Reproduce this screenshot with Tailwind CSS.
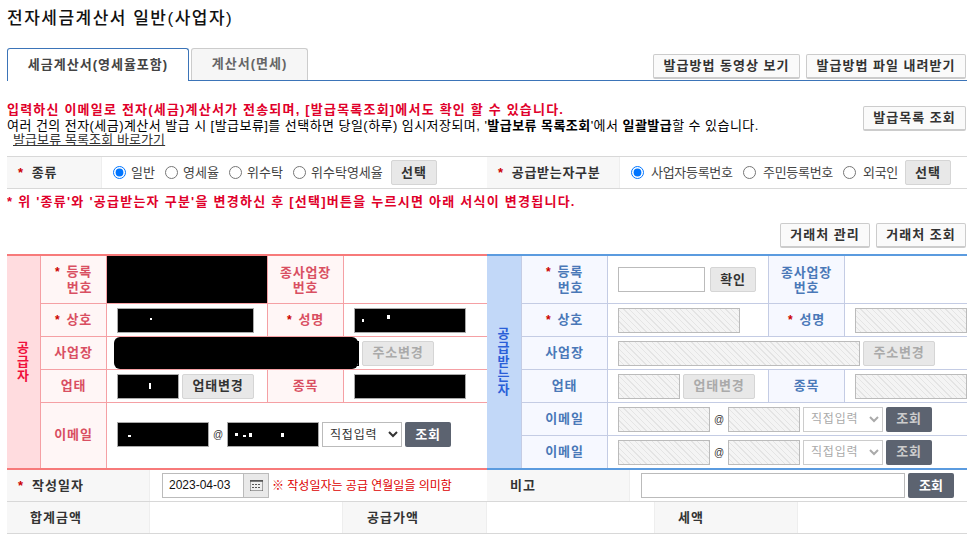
<!DOCTYPE html>
<html lang="ko">
<head>
  <meta charset="UTF-8">
  <title>전자세금계산서 일반(사업자)</title>
  <script src="https://cdn.jsdelivr.net/npm/@tailwindcss/browser@4"></script>
</head>
<body class="bg-white font-['Liberation_Sans','Noto_Sans_CJK_KR',sans-serif] text-[13px] text-black overflow-hidden">
  <div class="w-[960px] ml-[7px] h-[539px] overflow-hidden">
    <!-- Title -->
    <h1 class="h-[48px] pt-[6px] text-[17px] leading-[26px] font-medium tracking-[1.5px] text-[#111]">전자세금계산서 일반(사업자)</h1>

    <!-- Tabs -->
    <div class="flex h-[33px] items-end border-b border-[#3b74b8]">
      <div class="w-[182px] h-[33px] -mb-px border border-b-0 border-[#3b74b8] rounded-t-[3px] bg-white text-center leading-[31px] font-bold tracking-[1px] text-[#444]">세금계산서(영세율포함)</div>
      <div class="w-[117px] h-[32px] ml-[2px] border border-b-0 border-[#ccc] rounded-t-[3px] bg-[#f6f6f6] text-center leading-[30px] font-bold tracking-[1px] text-[#666]">계산서(면세)</div>
      <div class="ml-auto flex gap-[6px] pr-px mb-px">
        <button class="w-[147px] h-[25px] border border-[#ccc] border-b-2 rounded-[2px] bg-[#fafafa] font-bold tracking-[1px] text-[#333]">발급방법 동영상 보기</button>
        <button class="w-[160px] h-[25px] border border-[#ccc] border-b-2 rounded-[2px] bg-[#fafafa] font-bold tracking-[1px] text-[#333]">발급방법 파일 내려받기</button>
      </div>
    </div>

    <!-- Notice -->
    <div class="flex h-[75px]">
      <div class="flex-1 pt-[20px]">
        <p class="h-[17px] leading-[17px] font-bold tracking-[1.2px] text-[#e0002a]">입력하신 이메일로 전자(세금)계산서가 전송되며, [발급목록조회]에서도 확인 할 수 있습니다.</p>
        <p class="h-[16px] leading-[16px] tracking-[0.45px]">여러 건의 전자(세금)계산서 발급 시 [발급보류]를 선택하면 당일(하루) 임시저장되며, '<b>발급보류 목록조회</b>'에서 <b>일괄발급</b>할 수 있습니다.</p>
        <a class="block -mt-[2px] ml-[6px] leading-[16px] tracking-[0.1px] text-[#333] underline">발급보류 목록조회 바로가기</a>
      </div>
      <button class="w-[103px] h-[25px] mt-[25px] mr-px border border-[#ccc] border-b-2 rounded-[2px] bg-[#fafafa] font-bold tracking-[1px] text-[#333]">발급목록 조회</button>
    </div>

    <!-- Type row -->
    <div class="flex h-[33px] border-y border-[#d8d8d8]">
      <div class="w-[95px] bg-[#f7f7f7] border-r border-[#eee] pl-[11px] flex items-center font-bold text-[#333] tracking-[0.8px]"><span class="text-[#c00] mr-[8px]">*</span>종류</div>
      <div class="w-[385px] flex items-center pl-[11px] text-[#444]">
        <input type="radio" name="kind" checked class="w-[13px] h-[13px] m-0">
        <span class="ml-[5px] w-[34px]">일반</span>
        <input type="radio" name="kind" class="w-[13px] h-[13px] m-0">
        <span class="ml-[5px] w-[46px]">영세율</span>
        <input type="radio" name="kind" class="w-[13px] h-[13px] m-0">
        <span class="ml-[5px] w-[46px]">위수탁</span>
        <input type="radio" name="kind" class="w-[13px] h-[13px] m-0">
        <span class="ml-[5px] w-[80px]">위수탁영세율</span>
        <button class="w-[46px] h-[25px] border border-[#d5d5d5] rounded-[2px] bg-[#e8e8e8] font-bold tracking-[1px] text-[#333]">선택</button>
      </div>
      <div class="w-[133px] bg-[#f7f7f7] border-r border-[#eee] pl-[11px] flex items-center font-bold text-[#333] tracking-[0.7px]"><span class="text-[#c00] mr-[8px]">*</span>공급받는자구분</div>
      <div class="flex-1 flex items-center pl-[11px] text-[#444] tracking-[-0.3px]">
        <input type="radio" name="recv" checked class="w-[13px] h-[13px] m-0">
        <span class="ml-[7px] w-[92px]">사업자등록번호</span>
        <input type="radio" name="recv" class="w-[13px] h-[13px] m-0">
        <span class="ml-[7px] w-[80px]">주민등록번호</span>
        <input type="radio" name="recv" class="w-[13px] h-[13px] m-0">
        <span class="ml-[7px] w-[42px]">외국인</span>
        <button class="w-[46px] h-[25px] border border-[#d5d5d5] rounded-[2px] bg-[#e8e8e8] font-bold tracking-[1px] text-[#333]">선택</button>
      </div>
    </div>

    <!-- Note + partner buttons -->
    <div class="h-[65px] pt-[4px]">
      <p class="h-[23px] leading-[17px] font-bold tracking-[1.25px] text-[#e0002a]">* 위 '종류'와 '공급받는자 구분'을 변경하신 후 [선택]버튼을 누르시면 아래 서식이 변경됩니다.</p>
      <div class="flex justify-end gap-[6px] pr-px mt-[7px]">
        <button class="w-[90px] h-[25px] border border-[#ccc] border-b-2 rounded-[2px] bg-[#fafafa] font-bold tracking-[1px] text-[#333]">거래처 관리</button>
        <button class="w-[90px] h-[25px] border border-[#ccc] border-b-2 rounded-[2px] bg-[#fafafa] font-bold tracking-[1px] text-[#333]">거래처 조회</button>
      </div>
    </div>

    <!-- Supplier / receiver -->
    <div class="flex h-[216px]">
      <div class="w-[480px] grid grid-cols-[33px_66px_161px_76px_144px] grid-rows-[48px_33px_33px_33px_65px] border-y-2 border-[#f77a7a] font-bold text-[#d94f62] tracking-[0.8px]">
        <div class="row-span-5 bg-[#ffdcdf] flex items-center justify-center"><span class="w-[14px] text-center break-all leading-[14px] text-[#f0103c]">공급자</span></div>
        <div class="border-l border-b border-[#f5a0a4] bg-[#fff6f6] flex items-center justify-center text-center leading-[15px]"><span><span class="text-[#c00] text-[12px] mr-[6px]">*</span>등록<br><span class="ml-[12px]">번호</span></span></div>
        <div class="border-l border-b border-[#f5a0a4] bg-black"></div>
        <div class="border-l border-b border-[#f5a0a4] bg-[#fff6f6] flex items-center justify-center text-center leading-[15px]">종사업장<br>번호</div>
        <div class="border-l border-b border-[#f5a0a4]"></div>

        <div class="border-l border-b border-[#f5a0a4] bg-[#fff6f6] flex items-center justify-center"><span class="text-[#c00] text-[12px] mr-[6px]">*</span>상호</div>
        <div class="border-l border-b border-[#f5a0a4] flex items-center pl-[10px]"><div class="relative w-[137px] h-[25px] border border-[#aaa] bg-black"><i class="absolute left-[32px] top-[9px] w-[2px] h-[2px] bg-white"></i></div></div>
        <div class="border-l border-b border-[#f5a0a4] bg-[#fff6f6] flex items-center justify-center"><span class="text-[#c00] text-[12px] mr-[6px]">*</span>성명</div>
        <div class="border-l border-b border-[#f5a0a4] flex items-center pl-[10px]"><div class="relative w-[112px] h-[25px] border border-[#aaa] bg-black"><i class="absolute left-[7px] top-[10px] w-[2px] h-[3px] bg-white"></i><i class="absolute left-[32px] top-[6px] w-[3px] h-[4px] bg-white"></i></div></div>

        <div class="border-l border-b border-[#f5a0a4] bg-[#fff6f6] flex items-center justify-center">사업장</div>
        <div class="col-span-3 border-l border-b border-[#f5a0a4] relative flex items-center pl-[10px]">
          <div class="w-[242px] h-[25px] border border-black"></div>
          <div class="absolute left-[7px] top-0 bottom-0 w-[244px] bg-black rounded-[6px]"></div>
          <button class="w-[72px] h-[25px] ml-[3px] border border-[#d5d5d5] rounded-[2px] bg-[#e8e8e8] text-[#aaa]">주소변경</button>
        </div>

        <div class="border-l border-b border-[#f5a0a4] bg-[#fff6f6] flex items-center justify-center">업태</div>
        <div class="border-l border-b border-[#f5a0a4] flex items-center pl-[10px]">
          <div class="relative w-[62px] h-[25px] border border-[#aaa] bg-black"><i class="absolute left-[31px] top-[8px] w-[2px] h-[6px] bg-white"></i></div>
          <button class="w-[72px] h-[25px] ml-[3px] border border-[#d5d5d5] rounded-[2px] bg-[#e8e8e8] text-[#333]">업태변경</button>
        </div>
        <div class="border-l border-b border-[#f5a0a4] bg-[#fff6f6] flex items-center justify-center">종목</div>
        <div class="border-l border-b border-[#f5a0a4] flex items-center pl-[10px]"><div class="w-[112px] h-[25px] border border-[#aaa] bg-black"></div></div>

        <div class="border-l border-[#f5a0a4] bg-[#fff6f6] flex items-center justify-center pb-[2px]">이메일</div>
        <div class="col-span-3 border-l border-[#f5a0a4] flex items-center pl-[10px] pb-[2px] font-normal">
          <div class="relative w-[92px] h-[25px] border border-[#aaa] bg-black"><i class="absolute left-[10px] top-[12px] w-[3px] h-[2px] bg-white"></i></div>
          <span class="w-[18px] text-center text-[10px] text-[#333] tracking-normal">@</span>
          <div class="relative w-[92px] h-[25px] border border-[#aaa] bg-black"><i class="absolute left-[7px] top-[10px] w-[3px] h-[3px] bg-white"></i><i class="absolute left-[15px] top-[12px] w-[3px] h-[2px] bg-white"></i><i class="absolute left-[21px] top-[10px] w-[3px] h-[4px] bg-white"></i><i class="absolute left-[53px] top-[10px] w-[3px] h-[4px] bg-white"></i></div>
          <select class="w-[80px] h-[25px] ml-[3px] border border-[#bbb] bg-white text-[12px] text-[#333] pl-[3px]"><option>직접입력</option></select>
          <button class="w-[46px] h-[25px] ml-[3px] rounded-[2px] bg-[#5c6370] font-bold text-white">조회</button>
        </div>
      </div>

      <div class="w-[480px] overflow-hidden grid grid-cols-[34px_86px_161px_76px_123px] grid-rows-[48px_33px_33px_33px_33px_32px] border-y-2 border-[#5b9bdf] font-bold text-[#4a78b8] tracking-[0.8px]">
        <div class="row-span-6 bg-[#c2d8f8] flex items-center justify-center"><span class="w-[14px] text-center break-all leading-[14px] text-[#2a5fd8]">공급받는자</span></div>
        <div class="border-l border-b border-[#c4cce4] bg-[#f6f8ff] flex items-center justify-center text-center leading-[15px]"><span><span class="text-[#c00] text-[12px] mr-[6px]">*</span>등록<br><span class="ml-[12px]">번호</span></span></div>
        <div class="border-l border-b border-[#c4cce4] flex items-center pl-[10px]">
          <input class="w-[87px] h-[25px] border border-[#bbb] bg-white">
          <button class="w-[46px] h-[25px] ml-[5px] border border-[#d5d5d5] rounded-[2px] bg-[#e8e8e8] text-[#333]">확인</button>
        </div>
        <div class="border-l border-b border-[#c4cce4] bg-[#f6f8ff] flex items-center justify-center text-center leading-[15px]">종사업장<br>번호</div>
        <div class="border-l border-b border-[#c4cce4]"></div>

        <div class="border-l border-b border-[#c4cce4] bg-[#f6f8ff] flex items-center justify-center"><span class="text-[#c00] text-[12px] mr-[6px]">*</span>상호</div>
        <div class="border-l border-b border-[#c4cce4] flex items-center pl-[10px]"><div class="w-[122px] h-[25px] border border-[#bbb] bg-[repeating-linear-gradient(45deg,#f4f4f4,#f4f4f4_3px,#e4e4e4_3px,#e4e4e4_4px)]"></div></div>
        <div class="border-l border-b border-[#c4cce4] bg-[#f6f8ff] flex items-center justify-center"><span class="text-[#c00] text-[12px] mr-[6px]">*</span>성명</div>
        <div class="border-l border-b border-[#c4cce4] flex items-center pl-[10px]"><div class="w-[112px] h-[25px] shrink-0 border border-[#bbb] bg-[repeating-linear-gradient(45deg,#f4f4f4,#f4f4f4_3px,#e4e4e4_3px,#e4e4e4_4px)]"></div></div>

        <div class="border-l border-b border-[#c4cce4] bg-[#f6f8ff] flex items-center justify-center">사업장</div>
        <div class="col-span-3 border-l border-b border-[#c4cce4] flex items-center pl-[10px]">
          <div class="w-[242px] h-[25px] border border-[#bbb] bg-[repeating-linear-gradient(45deg,#f4f4f4,#f4f4f4_3px,#e4e4e4_3px,#e4e4e4_4px)]"></div>
          <button class="w-[72px] h-[25px] ml-[3px] border border-[#d5d5d5] rounded-[2px] bg-[#e8e8e8] text-[#aaa]">주소변경</button>
        </div>

        <div class="border-l border-b border-[#c4cce4] bg-[#f6f8ff] flex items-center justify-center">업태</div>
        <div class="border-l border-b border-[#c4cce4] flex items-center pl-[10px]">
          <div class="w-[62px] h-[25px] border border-[#bbb] bg-[repeating-linear-gradient(45deg,#f4f4f4,#f4f4f4_3px,#e4e4e4_3px,#e4e4e4_4px)]"></div>
          <button class="w-[72px] h-[25px] ml-[3px] border border-[#d5d5d5] rounded-[2px] bg-[#e8e8e8] text-[#aaa]">업태변경</button>
        </div>
        <div class="border-l border-b border-[#c4cce4] bg-[#f6f8ff] flex items-center justify-center">종목</div>
        <div class="border-l border-b border-[#c4cce4] flex items-center pl-[10px]"><div class="w-[112px] h-[25px] shrink-0 border border-[#bbb] bg-[repeating-linear-gradient(45deg,#f4f4f4,#f4f4f4_3px,#e4e4e4_3px,#e4e4e4_4px)]"></div></div>

        <div class="border-l border-b border-[#c4cce4] bg-[#f6f8ff] flex items-center justify-center">이메일</div>
        <div class="col-span-3 border-l border-b border-[#c4cce4] flex items-center pl-[10px] font-normal">
          <div class="w-[92px] h-[25px] border border-[#bbb] bg-[repeating-linear-gradient(45deg,#f4f4f4,#f4f4f4_3px,#e4e4e4_3px,#e4e4e4_4px)]"></div>
          <span class="w-[18px] text-center text-[10px] text-[#333] tracking-normal">@</span>
          <div class="w-[72px] h-[25px] border border-[#bbb] bg-[repeating-linear-gradient(45deg,#f4f4f4,#f4f4f4_3px,#e4e4e4_3px,#e4e4e4_4px)]"></div>
          <select disabled class="w-[80px] h-[25px] ml-[3px] border border-[#ccc] bg-white text-[12px] text-[#aaa] pl-[3px]"><option>직접입력</option></select>
          <button class="w-[46px] h-[25px] ml-[3px] rounded-[2px] bg-[#5c6370] font-bold text-[#ccc]">조회</button>
        </div>

        <div class="border-l border-[#c4cce4] bg-[#f6f8ff] flex items-center justify-center">이메일</div>
        <div class="col-span-3 border-l border-[#c4cce4] flex items-center pl-[10px] font-normal">
          <div class="w-[92px] h-[25px] border border-[#bbb] bg-[repeating-linear-gradient(45deg,#f4f4f4,#f4f4f4_3px,#e4e4e4_3px,#e4e4e4_4px)]"></div>
          <span class="w-[18px] text-center text-[10px] text-[#333] tracking-normal">@</span>
          <div class="w-[72px] h-[25px] border border-[#bbb] bg-[repeating-linear-gradient(45deg,#f4f4f4,#f4f4f4_3px,#e4e4e4_3px,#e4e4e4_4px)]"></div>
          <select disabled class="w-[80px] h-[25px] ml-[3px] border border-[#ccc] bg-white text-[12px] text-[#aaa] pl-[3px]"><option>직접입력</option></select>
          <button class="w-[46px] h-[25px] ml-[3px] rounded-[2px] bg-[#5c6370] font-bold text-[#ccc]">조회</button>
        </div>
      </div>
    </div>

    <!-- Date row -->
    <div class="grid grid-cols-[143px_337px_143px_337px] h-[32px] border-b border-[#d8d8d8]">
      <div class="bg-[#f7f7f7] border-r border-[#eee] pl-[11px] flex items-center font-bold text-[#333] tracking-[1px]"><span class="text-[#c00] mr-[8px]">*</span>작성일자</div>
      <div class="flex items-center pl-[12px]">
        <div class="w-[82px] h-[25px] border border-[#bbb] pl-[6px] text-[12px] leading-[23px] text-[#111]">2023-04-03</div>
        <div class="w-[25px] h-[25px] border border-l-0 border-[#bbb] bg-[#e9e9e9] flex items-center justify-center">
          <svg width="13" height="11" viewBox="0 0 13 11"><path d="M0 1h13v10H0z" fill="#eee" stroke="#555"/><path d="M0 0h13v1.500H0z" fill="#555"/><path d="M2 4h2v1H2zM5 4h2v1H5zM8 4h2v1H8zM2 7h2v1H2zM5 7h2v1H5zM8 7h2v1H8z" fill="#555"/></svg>
        </div>
        <span class="ml-[3px] text-[12px] text-[#d00]">※ 작성일자는 공급 연월일을 의미함</span>
      </div>
      <div class="bg-[#f7f7f7] border-r border-[#eee] pl-[23px] flex items-center font-bold text-[#333] tracking-[1px]">비고</div>
      <div class="flex items-center pl-[11px]">
        <input class="w-[264px] h-[25px] border border-[#bbb] bg-white">
        <button class="w-[46px] h-[25px] ml-[3px] rounded-[2px] bg-[#5c6370] font-bold text-white">조회</button>
      </div>
    </div>

    <!-- Totals row -->
    <div class="grid grid-cols-[143px_192px_145px_167px_144px_169px] h-[32px] border-b border-[#d8d8d8] font-bold text-[#333] tracking-[1px]">
      <div class="bg-[#f7f7f7] border-r border-[#eee] pl-[23px] flex items-center">합계금액</div>
      <div></div>
      <div class="bg-[#f7f7f7] border-x border-[#eee] pl-[24px] flex items-center">공급가액</div>
      <div></div>
      <div class="bg-[#f7f7f7] border-x border-[#eee] pl-[23px] flex items-center">세액</div>
      <div></div>
    </div>
  </div>
</body>
</html>
